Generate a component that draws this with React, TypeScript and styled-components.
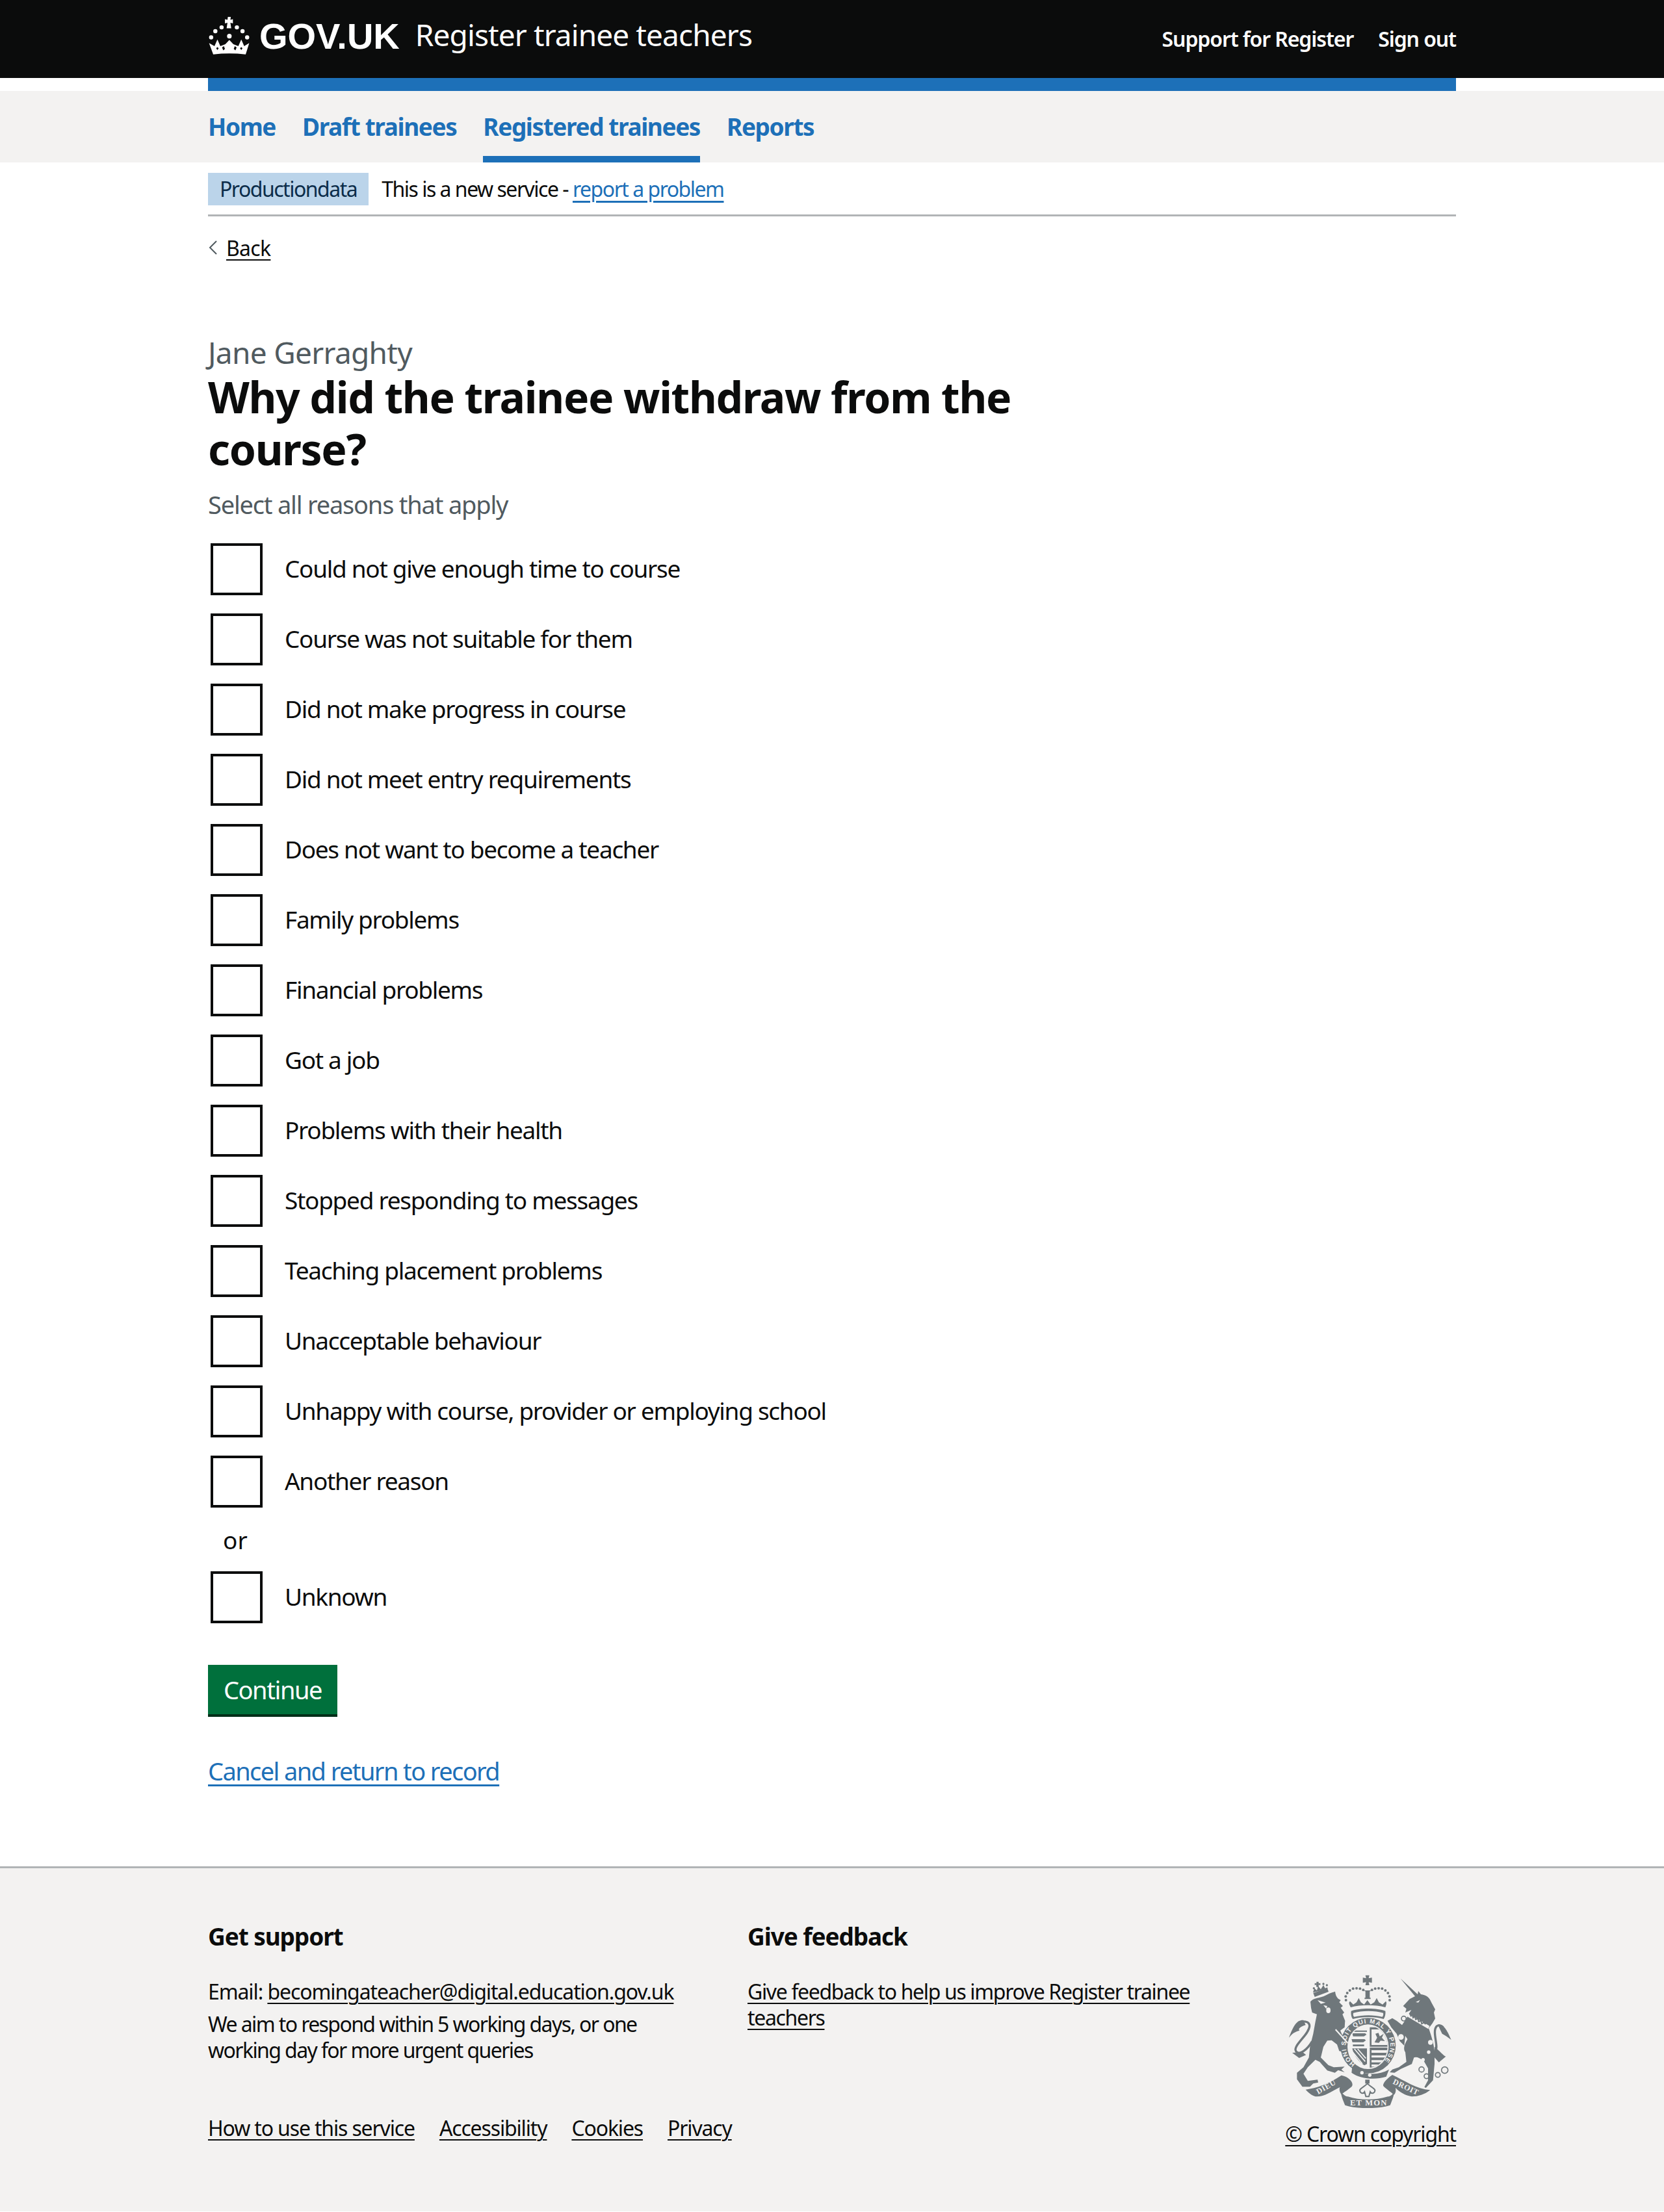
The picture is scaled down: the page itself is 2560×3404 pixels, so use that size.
import React from "react";
import styled, { createGlobalStyle } from "styled-components";

const GlobalStyle = createGlobalStyle`
  html, body { margin: 0; padding: 0; background: #fff; }
  body {
    font-family: "Noto Sans", "Liberation Sans", sans-serif;
    color: #0b0c0c;
  }
  * { box-sizing: border-box; }
`;

const REASONS = [
  "Could not give enough time to course",
  "Course was not suitable for them",
  "Did not make progress in course",
  "Did not meet entry requirements",
  "Does not want to become a teacher",
  "Family problems",
  "Financial problems",
  "Got a job",
  "Problems with their health",
  "Stopped responding to messages",
  "Teaching placement problems",
  "Unacceptable behaviour",
  "Unhappy with course, provider or employing school",
  "Another reason",
];

const CROWN_BEADS = [
  [366, 205], [365, 188], [372, 172], [384, 160], [399, 152], [415, 150], [431, 152], [446, 158],
  [486, 158], [501, 152], [517, 150], [533, 152], [548, 160], [560, 172], [567, 188], [568, 205],
];

const Container = styled.div`
  width: 1920px;
  margin: 0 auto;
`;

const Header = styled.header`
  background: #0b0c0c;
  height: 120px;
  color: #fff;
`;

const HeaderInner = styled(Container)`
  display: flex;
  align-items: flex-start;
  justify-content: space-between;
`;

const Brand = styled.div`
  display: flex;
  align-items: center;
  height: 110px;
`;

const Wordmark = styled.span`
  font-family: "Liberation Sans", sans-serif;
  font-weight: 700;
  font-size: 56px;
  margin-left: 13px;
`;

const ServiceName = styled.span`
  font-size: 46px;
  letter-spacing: -0.9px;
  margin: 0 0 4px 24px;
`;

const HeaderLinks = styled.div`
  display: flex;
  gap: 38px;
  padding-top: 40px;
  font-size: 32px;
  line-height: 40px;
  font-weight: 600;
  letter-spacing: -1.1px;
`;

const BlueBar = styled(Container)`
  height: 20px;
  background: #1d70b8;
`;

const Nav = styled.nav`
  background: #f3f2f1;
  height: 110px;
`;

const NavList = styled(Container)`
  display: flex;
  gap: 41px;
`;

const NavItem = styled.a<{ $active?: boolean }>`
  height: 110px;
  padding-top: 31px;
  font-size: 37px;
  line-height: 48px;
  font-weight: 700;
  letter-spacing: -1.4px;
  color: #1d70b8;
  border-bottom: 10px solid ${(p) => (p.$active ? "#1d70b8" : "transparent")};
`;

const Banner = styled(Container)`
  display: flex;
  align-items: center;
  height: 83px;
  padding: 16px 0 14px;
  border-bottom: 3px solid #b1b4b6;
  font-size: 32px;
  letter-spacing: -1.5px;
`;

const Tag = styled.span`
  background: #bbd4ea;
  color: #0c2d4a;
  height: 50px;
  line-height: 50px;
  padding: 0 18px;
  margin-right: 20px;
`;

const BannerText = styled.span`
  margin-bottom: 2px;
`;

const BlueLink = styled.a`
  color: #1d70b8;
  text-decoration: underline;
  text-decoration-thickness: 3px;
  text-underline-offset: 6px;
`;

const BackRow = styled.div`
  display: flex;
  align-items: center;
  height: 40px;
  margin-top: 28px;
  font-size: 32px;
  letter-spacing: -0.7px;
  svg { margin-right: 13px; }
`;

const DarkLink = styled.a`
  color: #0b0c0c;
  text-decoration: underline;
  text-decoration-thickness: 2px;
  text-underline-offset: 5px;
`;

const Main = styled(Container)`
  padding-top: 113px;
`;

const Caption = styled.div`
  font-size: 46px;
  line-height: 56px;
  color: #505a5f;
  letter-spacing: -0.7px;
`;

const Title = styled.h1`
  margin: 0;
  width: 1280px;
  font-size: 66px;
  line-height: 80px;
  font-weight: 700;
  letter-spacing: -1.3px;
`;

const Hint = styled.div`
  margin-top: 21px;
  font-size: 38px;
  line-height: 50px;
  color: #505a5f;
  letter-spacing: -1.2px;
`;

const Reasons = styled.div`
  display: flex;
  flex-direction: column;
  gap: 28px;
  margin-top: 35px;
  padding-left: 4px;
`;

const UnknownGroup = styled.div`
  padding-left: 4px;
`;

const ReasonRow = styled.label`
  display: flex;
  align-items: center;
  gap: 35px;
  height: 80px;
  font-size: 37px;
  letter-spacing: -1.3px;
`;

const ReasonText = styled.span`
  margin: 0 0 3px -1px;
`;

const Box = styled.input`
  appearance: none;
  flex: none;
  width: 80px;
  height: 80px;
  margin: 0;
  background: #fff;
  border: 4px solid #0b0c0c;
`;

const OrDivider = styled.div`
  height: 98px;
  line-height: 100px;
  padding-left: 19px;
  font-size: 37px;
`;

const ContinueButton = styled.button`
  display: block;
  margin-top: 64px;
  width: 199px;
  height: 76px;
  padding: 0;
  border: 0;
  background: #00703c;
  box-shadow: 0 4px 0 #002d18;
  color: #fff;
  font-family: inherit;
  font-size: 38px;
  letter-spacing: -1.4px;
`;

const CancelRow = styled.div`
  margin-top: 62px;
  height: 50px;
  line-height: 50px;
  font-size: 38px;
  letter-spacing: -1.6px;
`;

const Footer = styled.footer`
  margin-top: 122px;
  height: 531px;
  background: #f3f2f1;
  border-top: 3px solid #b1b4b6;
`;

const FooterInner = styled(Container)`
  display: flex;
  justify-content: space-between;
  padding-top: 80px;
  font-size: 32px;
  letter-spacing: -1.15px;
`;

const FooterLeft = styled.div`
  width: 1620px;
`;

const Columns = styled.div`
  display: grid;
  grid-template-columns: 830px 700px;
`;

const ColumnTitle = styled.h2`
  margin: 0 0 40px;
  font-size: 37px;
  line-height: 50px;
  font-weight: 700;
  letter-spacing: -1.1px;
`;

const FooterText = styled.p<{ $tracking: number; $gap?: number }>`
  margin: 0 0 ${(p) => p.$gap ?? 0}px;
  line-height: 40px;
  letter-spacing: ${(p) => p.$tracking}px;
`;

const MetaLinks = styled.div`
  display: flex;
  gap: 38px;
  margin-top: 80px;
  line-height: 40px;
  letter-spacing: -1.15px;
`;

const FooterRight = styled.div`
  display: flex;
  flex-direction: column;
  align-items: flex-end;
  padding-top: 84px;
  svg { margin-right: 6px; }
`;

const CopyrightRow = styled.div`
  margin-top: 20px;
  line-height: 40px;
`;

const CrownLogo = () => (
  <svg width="66" height="62" viewBox="25 25 205 190" fill="#fff" aria-hidden="true">
    <path d="M120 30h14l-2 14 12-3v20l-12-3 4 26h-22l4-26-12 3V41l12 3z" />
    <circle cx="90" cy="80" r="10" />
    <circle cx="163" cy="80" r="10" />
    <circle cx="60" cy="98" r="10" />
    <circle cx="190" cy="98" r="10" />
    <circle cx="40" cy="128" r="10" />
    <circle cx="212" cy="128" r="10" />
    <circle cx="127" cy="122" r="11" />
    <path d="M30 155L56 170L70 138L84 170L108 160L127 140L146 160L170 170L184 138L198 170L222 155L205 209Q127 200 50 209Z" />
    <path d="M92 176l9-6 5 13-8 7zM162 176l-9-6-5 13 8 7zM64 180l6-6 6 6-6 8zM178 180l6-6 6 6-6 8z" fill="#0b0c0c" />
  </svg>
);

const BackChevron = () => (
  <svg width="15" height="24" viewBox="0 0 15 24" fill="none" stroke="#505a5f" strokeWidth="2" aria-hidden="true">
    <path d="M13 2L3 12l10 10" />
  </svg>
);

// hand drawn royal arms, coordinates follow the 3x crop of the reference
const RoyalArms = () => (
  <svg width="252" height="205" viewBox="100 88 756 615" aria-hidden="true">
    <defs>
      <path id="garterRing" d="M409 499A103 103 0 1 1 527 499" />
      <clipPath id="shieldClip">
        <ellipse cx="468" cy="420" rx="90" ry="98" />
      </clipPath>
    </defs>

    <g fill="#6f777b">
      {/* lion */}
      <path d="M202 212C215 195 240 195 262 188C285 175 300 170 316 165C318 180 322 190 330 198L342 205L335 215L352 232L342 240L358 262L350 270L362 300L360 330L340 345L372 420L360 445L335 440L325 410L300 390L280 392L262 420L250 470L285 505L310 515L360 512L345 525L360 538L330 528L315 540L280 530L245 490L225 480L190 515L170 545L190 578L235 572L238 585L215 590L200 605L165 605L140 570L140 540L170 515L195 470L200 420L215 360L225 305L232 270L210 262L205 240Z" />
      <path d="M170 297C140 295 125 320 103 378C125 350 140 350 152 345C142 338 160 325 180 320Z" />
      <path d="M118 448L165 444L182 458L150 472Z" />
      {/* lion crown */}
      <path d="M215 172L280 150L286 166L222 190Z" />
      <path d="M214 170L220 150L232 160L238 140L250 155L262 135L270 150L280 146L282 152Z" />
      <path d="M230 120h10v8l8-2v10l-8-2v10h-10v-10l-8 2v-10l8 2z" />
      {/* unicorn */}
      <path d="M618 105L697 178L700 163L712 178C735 180 752 192 760 215L778 248L772 262L778 290L765 312L748 335C760 370 770 400 775 440L775 500C772 530 770 560 768 575L735 610L728 606L745 575L745 520L725 485C705 470 690 465 680 470L670 500L620 522L590 540L568 538L580 525L610 515L645 490L640 445C625 425 645 395 650 385L640 370L635 415L615 395L600 360L575 330L558 300L580 288L600 300L625 320L645 290L655 270L668 250L640 262L645 245L630 232L660 200L685 187Z" />
      <path d="M790 318C820 315 835 350 852 388C835 375 825 368 810 360Z" />
      <path d="M775 420C800 440 815 460 827 465L795 492L775 470Z" />
      {/* royal crown */}
      <path d="M456 90h18l-3 14 15-3v24l-15-3 3 14h-18l3-14-15 3v-24l15 3zM452 160h28v4h-4v30h4v6h-28v-6h4v-30h-4z" />
      <path d="M388 238C380 222 378 215 385 210L400 225L415 215L425 195L435 215L450 225L465 205L480 225L497 215L508 195L518 215L535 225L550 210C555 215 553 225 548 238C500 225 435 225 388 238Z" />
      <path d="M390 255C430 240 510 240 548 255C550 270 545 285 540 292C500 280 440 280 398 292C392 285 388 270 390 255Z" />
      {/* garter */}
      <circle cx="468" cy="415" r="128" />
      <path d="M395 510C440 552 510 556 565 525L552 558C500 575 430 568 392 540Z" />
      {/* motto ribbon */}
      <path d="M180 618C235 610 290 590 345 552C385 560 405 590 392 605C375 620 355 632 345 640C335 628 335 615 338 607C300 625 270 650 232 650C215 650 195 635 180 618Z" />
      <path d="M345 625C340 640 352 665 362 690C420 708 510 708 570 690C580 665 590 640 588 625C585 640 570 650 560 650C500 668 430 668 375 650C365 650 350 640 345 625Z" />
      <path d="M580 550C635 575 690 615 755 620C730 640 700 650 670 650C640 645 615 630 595 610C598 625 595 635 588 642C575 630 545 610 538 600C535 585 565 560 580 550Z" />
      <rect x="455" y="572" width="20" height="18" />
    </g>

    {/* tails and chain */}
    <g fill="none" stroke="#6f777b">
      <path d="M210 395C190 430 150 465 135 440C120 415 195 365 198 325C198 300 165 298 150 315" strokeWidth="10" />
      <path d="M775 440C800 430 760 350 785 325C795 318 805 320 815 330" strokeWidth="10" />
      <g strokeWidth="5">
        <circle cx="633" cy="290" r="11" />
        <circle cx="715" cy="525" r="12" />
        <circle cx="738" cy="556" r="11" />
        <circle cx="790" cy="550" r="11" />
        <circle cx="822" cy="528" r="15" />
      </g>
    </g>

    <g fill="#6f777b">
      {CROWN_BEADS.map(([x, y]) => (
        <circle key={`${x}-${y}`} cx={x} cy={y} r="6" />
      ))}
      <circle cx="218" cy="150" r="5" />
      <circle cx="234" cy="138" r="5" />
      <circle cx="262" cy="130" r="5" />
      <circle cx="278" cy="136" r="5" />
    </g>

    {/* light details over the dark shapes */}
    <g fill="#f3f2f1">
      <path d="M400 264C440 252 500 252 538 264C540 272 537 278 534 282C495 272 445 272 404 282C400 278 398 272 400 264Z" />
      <path d="M235 205L272 216L250 222Z" />
      <ellipse cx="285" cy="252" rx="10" ry="13" />
      <path d="M262 228L280 232L275 245Z" />
      <path d="M320 338L376 400L372 405L316 343Z" />
      <path d="M688 214L708 204L700 216Z" />
      <path d="M650 264L752 324L746 338L644 278Z" />
      <circle cx="620" cy="375" r="13" />
      <circle cx="756" cy="400" r="11" />
      <circle cx="748" cy="445" r="8" />
      <circle cx="722" cy="480" r="8" />
      <circle cx="440" cy="540" r="8" />
      <circle cx="476" cy="551" r="8" />
      <ellipse cx="468" cy="420" rx="95" ry="103" />
    </g>

    {/* collar points */}
    <path d="M660 266l6 12 6-6 4 14 8-6 4 14 10-4 4 14 10-4 4 14 10-6 8 8" fill="none" stroke="#6f777b" strokeWidth="6" />

    {/* shield quarters */}
    <g clipPath="url(#shieldClip)">
      <g fill="#6f777b">
        <path d="M385 345h78v6h-78zM395 358h60l6 6-12 8h-50zM392 385h60l6 6-12 8h-50zM398 410h52v8h-52z" />
        <path d="M476 330h92v90h-92zM476 424h92v96h-92z" />
        <path d="M395 428h68v72l-12 6c-25-15-48-45-56-78z" />
      </g>
      <g fill="#f3f2f1">
        <path d="M484 340h74v72h-74z" />
        <path d="M484 436h74v12h-74zM484 460h70v10h-70zM484 482h56v10h-56zM484 502h36v10h-36z" />
      </g>
      <path d="M498 400l12-22-8-18 14-4 6 16 18-12-8 18 14 16-20-2-8 10z" fill="#6f777b" />
      <g stroke="#f3f2f1" strokeWidth="5" fill="none">
        <path d="M405 430l50 58M420 430l38 44M398 445l44 54" />
      </g>
    </g>

    {/* fleur below the shield */}
    <path d="M465 590C480 605 495 610 500 620C500 635 485 640 478 628L472 650H458L452 628C445 640 430 635 430 620C435 610 450 605 465 590Z" fill="#f3f2f1" stroke="#6f777b" strokeWidth="6" />

    <g fill="#f3f2f1" fontFamily="Liberation Sans, sans-serif" fontWeight="700">
      <text fontSize="29" letterSpacing="2">
        <textPath href="#garterRing" textLength="500">HONI SOIT QUI MAL Y PENSE</textPath>
      </text>
    </g>
    <g fill="#f3f2f1" fontFamily="Liberation Serif, serif" fontWeight="700">
      <text fontSize="36" letterSpacing="2" transform="translate(238 640) rotate(-30)">DIEU</text>
      <text fontSize="36" letterSpacing="2" transform="translate(580 590) rotate(25)">DROIT</text>
      <text fontSize="38" x="385" y="692" textLength="168">ET MON</text>
    </g>
  </svg>
);

const App = () => {
  return (
    <>
      <GlobalStyle />
      <Header>
        <HeaderInner>
          <Brand>
            <CrownLogo />
            <Wordmark>GOV.UK</Wordmark>
            <ServiceName>Register trainee teachers</ServiceName>
          </Brand>
          <HeaderLinks>
            <span>Support for Register</span>
            <span>Sign out</span>
          </HeaderLinks>
        </HeaderInner>
      </Header>
      <BlueBar />
      <Nav>
        <NavList>
          <NavItem>Home</NavItem>
          <NavItem>Draft trainees</NavItem>
          <NavItem $active>Registered trainees</NavItem>
          <NavItem>Reports</NavItem>
        </NavList>
      </Nav>
      <Banner>
        <Tag>Productiondata</Tag>
        <BannerText>
          This is a new service - <BlueLink>report a problem</BlueLink>
        </BannerText>
      </Banner>
      <Container>
        <BackRow>
          <BackChevron />
          <DarkLink>Back</DarkLink>
        </BackRow>
      </Container>
      <Main>
        <Caption>Jane Gerraghty</Caption>
        <Title>Why did the trainee withdraw from the course?</Title>
        <Hint>Select all reasons that apply</Hint>
        <Reasons>
          {REASONS.map((reason) => (
            <ReasonRow key={reason}>
              <Box type="checkbox" />
              <ReasonText>{reason}</ReasonText>
            </ReasonRow>
          ))}
        </Reasons>
        <UnknownGroup>
          <OrDivider>or</OrDivider>
          <ReasonRow>
            <Box type="checkbox" />
            <ReasonText>Unknown</ReasonText>
          </ReasonRow>
        </UnknownGroup>
        <ContinueButton>Continue</ContinueButton>
        <CancelRow>
          <BlueLink>Cancel and return to record</BlueLink>
        </CancelRow>
      </Main>
      <Footer>
        <FooterInner>
          <FooterLeft>
            <Columns>
              <div>
                <ColumnTitle>Get support</ColumnTitle>
                <FooterText $tracking={-1.1} $gap={10}>
                  Email: <DarkLink>becomingateacher@digital.education.gov.uk</DarkLink>
                </FooterText>
                <FooterText $tracking={-1.6}>
                  We aim to respond within 5 working days, or one
                  <br />
                  working day for more urgent queries
                </FooterText>
              </div>
              <div>
                <ColumnTitle>Give feedback</ColumnTitle>
                <FooterText $tracking={-1.35}>
                  <DarkLink>Give feedback to help us improve Register trainee teachers</DarkLink>
                </FooterText>
              </div>
            </Columns>
            <MetaLinks>
              <DarkLink>How to use this service</DarkLink>
              <DarkLink>Accessibility</DarkLink>
              <DarkLink>Cookies</DarkLink>
              <DarkLink>Privacy</DarkLink>
            </MetaLinks>
          </FooterLeft>
          <FooterRight>
            <RoyalArms />
            <CopyrightRow>
              <DarkLink>© Crown copyright</DarkLink>
            </CopyrightRow>
          </FooterRight>
        </FooterInner>
      </Footer>
    </>
  );
};

export default App;
